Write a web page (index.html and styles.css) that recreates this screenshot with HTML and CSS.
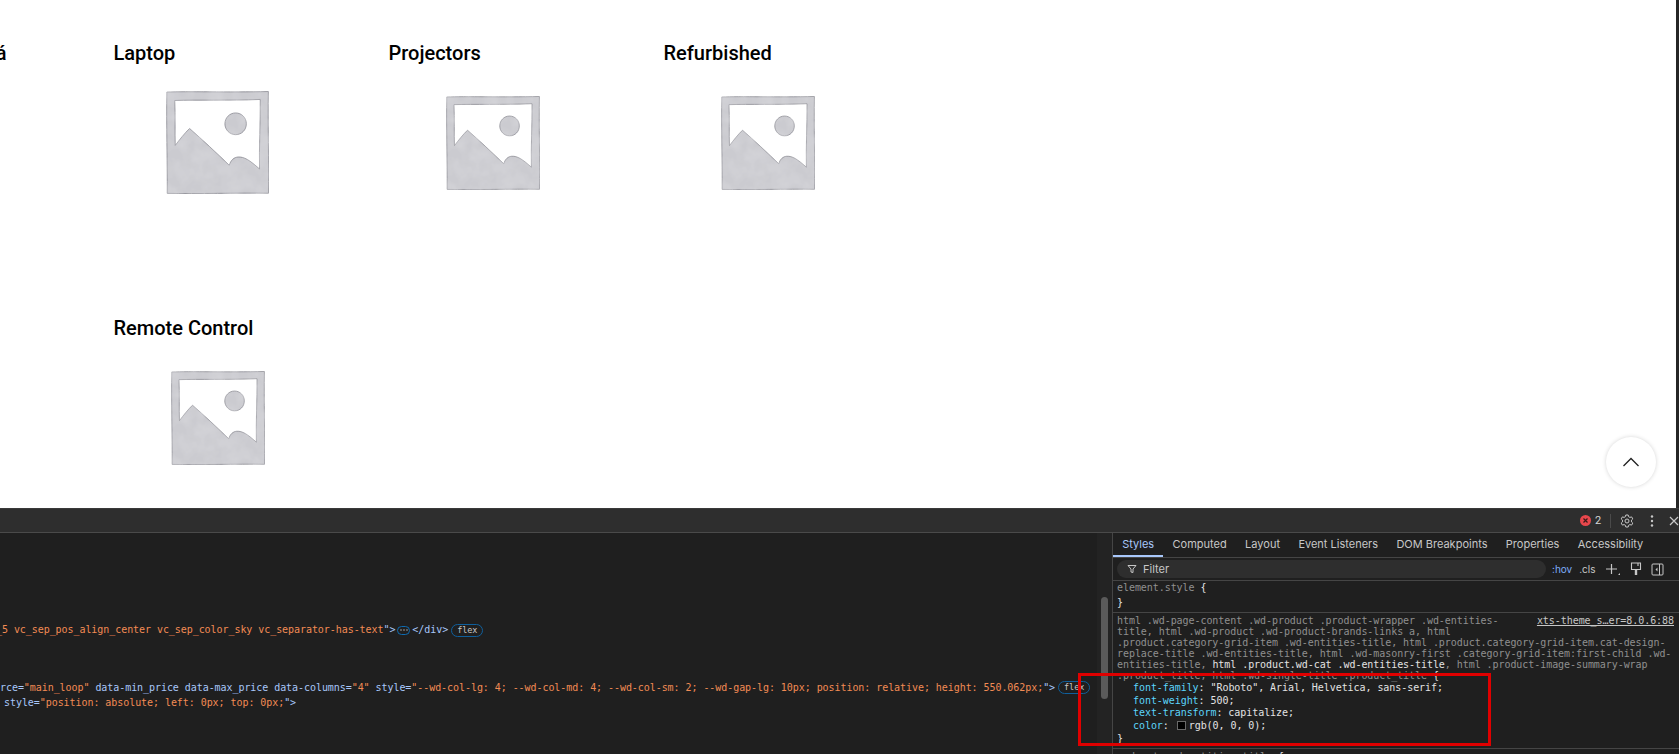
FILE: index.html
```html
<!DOCTYPE html>
<html lang="en">
<head>
<meta charset="utf-8">
<title>Product categories with DevTools</title>
<link rel="stylesheet" href="styles.css">
</head>
<body>
<svg class="defs" aria-hidden="true">
  <defs>
    <filter id="mottle" x="0" y="0" width="100%" height="100%">
      <feTurbulence type="fractalNoise" baseFrequency="0.07" numOctaves="3" seed="4" result="n"/>
      <feColorMatrix in="n" type="matrix" values="0 0 0 0 0.70  0 0 0 0 0.70  0 0 0 0 0.73  0.9 0 0 0 -0.25" result="c"/>
      <feComposite in="c" in2="SourceGraphic" operator="atop"/>
    </filter>
    <symbol id="placeholder" viewBox="0 0 100 100">
      <g filter="url(#mottle)">
        <path class="ph-shape" fill-rule="evenodd" d="M.8 1C20 .2 60 1.400 99.400 .5 98.800 30 100 70 99.500 99.300 70 98.800 30 100 1.200 99.400 1.400 70 .2 30 .8 1ZM8.500 9.200C9.200 25 8.500 40 9 52.800 13 47.500 18 41 22.900 36.400 35 47 50 61 61.400 72.100 63 67 66 64.400 70 64.100 76 63.800 81 67 90.800 75.700 90.300 55 91.700 30 91.500 8.200 60 9.500 30 8.500 8.500 9.200Z"/>
        <path class="ph-shape" d="M67.600 21.300C73.500 21.300 78 26 78 31.800 78 37.800 73.500 42.400 67.600 42.400 61.800 42.400 57.200 37.600 57.200 31.800 57.200 26 61.800 21.300 67.600 21.300Z"/>
      </g>
    </symbol>
  </defs>
</svg>

<main class="page">
  <div class="grid">
    <article class="cell">
      <h3 class="title title-clipped">á</h3>
    </article>
    <article class="cell">
      <h3 class="title">Laptop</h3>
      <div class="thumb"><svg class="ph ph-large"><use href="#placeholder"/></svg></div>
    </article>
    <article class="cell">
      <h3 class="title">Projectors</h3>
      <div class="thumb"><svg class="ph"><use href="#placeholder"/></svg></div>
    </article>
    <article class="cell">
      <h3 class="title">Refurbished</h3>
      <div class="thumb"><svg class="ph"><use href="#placeholder"/></svg></div>
    </article>
    <article class="cell cell-row2">
      <h3 class="title">Remote Control</h3>
      <div class="thumb"><svg class="ph"><use href="#placeholder"/></svg></div>
    </article>
  </div>
  <button class="to-top" aria-label="Scroll to top">
    <svg width="18" height="10" viewBox="0 0 18 10"><path d="M1.500 9 9 1.500 16.500 9" fill="none" stroke="#222" stroke-width="1.300"/></svg>
  </button>
</main>

<section class="devtools">
  <header class="dt-toolbar">
    <span class="err-badge"><svg width="11" height="11" viewBox="0 0 11 11"><circle cx="5.500" cy="5.500" r="5.500" fill="#e8474c"/><path d="M3.500 3.500l4 4M7.500 3.500l-4 4" stroke="#3a1a1a" stroke-width="1.200"/></svg><span>2</span></span>
    <span class="dt-sep"></span>
    <svg class="dt-gear" width="14" height="14" viewBox="0 0 14 14" fill="none" stroke="#c7c7c7" stroke-width="1"><path d="M5.800 1h2.400l.4 1.700 1.300.7 1.700-.5 1.200 2-1.300 1.200v1.800l1.300 1.200-1.200 2-1.700-.5-1.300.7-.4 1.700H5.800l-.4-1.700-1.300-.7-1.700.5-1.200-2 1.300-1.200V6.100L1.200 4.900l1.200-2 1.700.5 1.300-.7z"/><circle cx="7" cy="7" r="2"/></svg>
    <svg class="dt-dots" width="4" height="12" viewBox="0 0 4 12" fill="#c7c7c7"><circle cx="2" cy="1.500" r="1.200"/><circle cx="2" cy="6" r="1.200"/><circle cx="2" cy="10.500" r="1.200"/></svg>
    <svg class="dt-close" width="10" height="10" viewBox="0 0 10 10" stroke="#c7c7c7" stroke-width="1.200"><path d="M1 1l8 8M9 1l-8 8"/></svg>
  </header>
  <div class="dt-body">
    <div class="elements">
      <div class="el-line el-first"><span class="v">_5 vc_sep_pos_align_center vc_sep_color_sky vc_separator-has-text</span><span class="k">"&gt;</span><span class="dots"><svg width="8" height="2" viewBox="0 0 8 2" fill="#c7c7c7"><circle cx="1" cy="1" r=".7"/><circle cx="4" cy="1" r=".7"/><circle cx="7" cy="1" r=".7"/></svg></span><span class="k">&lt;/div&gt;</span><span class="flex-pill">flex</span></div>
      <div class="el-line el-second"><span class="k">rce=</span><span class="v">"main_loop"</span><span class="k"> data-min_price data-max_price data-columns=</span><span class="v">"4"</span><span class="k"> style=</span><span class="v">"--wd-col-lg: 4; --wd-col-md: 4; --wd-col-sm: 2; --wd-gap-lg: 10px; position: relative; height: 550.062px;</span><span class="k">"&gt;</span><span class="flex-pill">flex</span></div>
      <div class="el-line el-third"><span class="k">style=</span><span class="v">"position: absolute; left: 0px; top: 0px;</span><span class="k">"&gt;</span></div>
    </div>
    <div class="scroll-track"><div class="scroll-thumb"></div></div>
    <aside class="sidebar">
      <nav class="tabs">
        <span class="tab tab-active">Styles</span>
        <span class="tab">Computed</span>
        <span class="tab">Layout</span>
        <span class="tab">Event Listeners</span>
        <span class="tab">DOM Breakpoints</span>
        <span class="tab">Properties</span>
        <span class="tab">Accessibility</span>
      </nav>
      <div class="filter-row">
        <div class="filter-pill">
          <svg width="10" height="10" viewBox="0 0 10 10" fill="none" stroke="#c7c7c7" stroke-width="1"><path d="M1 1.500h8L6 5v3.500L4 8V5z"/></svg>
          <span>Filter</span>
        </div>
        <span class="hov">:hov</span>
        <span class="cls">.cls</span>
        <svg class="fi" width="16" height="14" viewBox="0 0 16 14" fill="none" stroke="#c7c7c7" stroke-width="1.200"><path d="M6.500 2v10M1 7h11"/><path d="M15 11v2h-2z" fill="#c7c7c7" stroke="none"/></svg>
        <svg class="fi" width="12" height="14" viewBox="0 0 12 14" fill="none" stroke="#c7c7c7" stroke-width="1.100"><path d="M1.500 1h9v6.500h-9zM8 1v3"/><path d="M4.800 7.500h2.400V13H4.800z" fill="#c7c7c7" stroke="none"/></svg>
        <svg class="fi" width="13" height="13" viewBox="0 0 13 13" fill="none" stroke="#c7c7c7" stroke-width="1"><rect x="1" y="1" width="11" height="11" rx="1"/><path d="M8.500 1v11"/><path d="M6.500 4.500v4l-2-2z" fill="#c7c7c7" stroke="none"/></svg>
      </div>
      <div class="rule rule-element">
        <div class="ln dim">element.style <span class="on">{</span></div>
        <div class="ln on">}</div>
      </div>
      <div class="rule rule-main">
        <div class="sel-first"><span class="dim">html .wd-page-content .wd-product .product-wrapper .wd-entities-</span><a class="src">xts-theme_s…er=8.0.6:88</a></div>
        <div class="sel dim">title, html .wd-product .wd-product-brands-links a, html</div>
        <div class="sel dim">.product.category-grid-item .wd-entities-title, html .product.category-grid-item.cat-design-</div>
        <div class="sel dim">replace-title .wd-entities-title, html .wd-masonry-first .category-grid-item:first-child .wd-</div>
        <div class="sel"><span class="dim">entities-title, </span><span class="on">html .product.wd-cat .wd-entities-title</span><span class="dim">, html .product-image-summary-wrap</span></div>
        <div class="sel dim">.product_title, html .wd-single-title .product_title <span class="on">{</span></div>
        <div class="prop"><span class="pn">font-family</span>: "Roboto", Arial, Helvetica, sans-serif;</div>
        <div class="prop"><span class="pn">font-weight</span>: 500;</div>
        <div class="prop"><span class="pn">text-transform</span>: capitalize;</div>
        <div class="prop"><span class="pn">color</span>: <span class="swatch"></span>rgb(0, 0, 0);</div>
        <div class="ln on">}</div>
      </div>
      <div class="rule rule-next">
        <div class="sel dim">.wd-cat .wd-entities-title <span class="on">{</span></div>
      </div>
    </aside>
  </div>
  <div class="red-box"></div>
</section>
</body>
</html>
```

FILE: styles.css
```css
* { box-sizing: border-box; }
html, body { margin: 0; height: 754px; overflow: hidden; }
body {
  width: 1679px;
  display: flex;
  flex-direction: column;
  background: #fff;
  font-family: "Roboto", "Liberation Sans", sans-serif;
}
.defs { position: absolute; width: 0; height: 0; }

/* page */
.page {
  position: relative;
  height: 508px;
  flex: none;
  overflow: hidden;
  background: #fff;
  border-right: 3px solid #262626;
}
.grid {
  display: grid;
  grid-template-columns: repeat(4, 275px);
  grid-auto-rows: 275px;
  margin-left: -161.500px;
  padding-top: 40.500px;
}
.cell { width: 208px; }
.cell-row2 { grid-column: 2; }
.title {
  margin: 0;
  font-size: 20px;
  line-height: 24px;
  font-weight: 500;
  color: #000;
}
.title-clipped { text-align: right; width: 168px; }
.thumb {
  height: 156px;
  display: flex;
  align-items: center;
  justify-content: center;
}
.ph { width: 94px; height: 96px; display: block; }
.ph-large { width: 103px; height: 105px; }
.ph-shape { fill: #cbcbd0; stroke: #85858d; stroke-width: .8; }
.to-top {
  position: absolute;
  left: 1606px;
  top: 437px;
  width: 50px;
  height: 50px;
  padding: 0;
  border: 0;
  border-radius: 50%;
  background: #fff;
  box-shadow: 0 0 4px rgba(0,0,0,.17);
  display: flex;
  align-items: center;
  justify-content: center;
}

/* devtools */
.devtools {
  position: relative;
  flex: 1;
  min-height: 0;
  overflow: hidden;
  display: flex;
  flex-direction: column;
  background: #1f1f1f;
  color: #e3e3e3;
}
.dt-toolbar {
  height: 25px;
  flex: none;
  display: flex;
  align-items: center;
  padding-left: 1580px;
  background: #2e2e2e;
  border-top: 1px solid #3a3a3a;
  border-bottom: 1px solid #4a4a4a;
}
.err-badge {
  display: flex;
  align-items: center;
  gap: 4px;
  width: 30px;
  font-size: 11px;
  color: #d5d5d5;
}
.dt-sep { width: 1px; height: 14px; background: #4a4a4a; }
.dt-gear { margin-left: 9px; }
.dt-dots { margin-left: 16px; }
.dt-close { margin-left: 15px; flex: none; }
.dt-body { flex: 1; min-height: 0; display: flex; }

.elements {
  width: 1097px;
  flex: none;
  overflow: hidden;
  padding-top: 90px;
  font-family: "DejaVu Sans Mono", monospace;
  font-size: 10px;
  letter-spacing: -.06px;
}
.el-line { height: 14px; line-height: 14px; white-space: pre; display: flex; align-items: center; }
.el-first { margin-left: -4px; }
.el-second { margin-top: 43.500px; }
.el-third { margin-top: 1px; padding-left: 4px; }
.k { color: #a8c7fa; }
.v { color: #f28b54; }
.dots {
  width: 13px;
  height: 9px;
  margin: 0 2px;
  border: 1px solid #0f6bb0;
  border-radius: 5px;
  display: flex;
  align-items: center;
  justify-content: center;
}
.flex-pill {
  height: 13px;
  margin-left: 3px;
  padding: 0 5px;
  border: 1px solid #0f5f9c;
  border-radius: 7px;
  color: #c7c7c7;
  font-size: 8.500px;
  line-height: 11px;
}
.scroll-track { width: 15px; flex: none; padding: 64px 0 0 4px; background: #232323; }
.scroll-thumb { width: 7px; height: 102px; border-radius: 4px; background: #5a5a5a; }

.sidebar {
  flex: 1;
  min-width: 0;
  overflow: hidden;
  border-left: 1px solid #454545;
}
.tabs {
  height: 25px;
  display: flex;
  align-items: center;
  border-bottom: 1px solid #454545;
  font-family: "Inter", "Roboto", sans-serif;
  font-size: 11px;
  color: #c7c7c7;
}
.tab { height: 24px; line-height: 23px; padding: 0 9.200px; white-space: nowrap; }
.tab-active { color: #a8c7fa; border-bottom: 2px solid #a8c7fa; }
.filter-row {
  height: 23px;
  display: flex;
  align-items: center;
  padding-left: 4px;
  border-bottom: 1px solid #454545;
  font-family: "Inter", "Roboto", sans-serif;
  font-size: 11px;
  color: #c7c7c7;
}
.filter-pill {
  width: 429px;
  height: 18px;
  display: flex;
  align-items: center;
  gap: 6px;
  padding-left: 10px;
  border-radius: 9px;
  background: #2e2e2e;
}
.hov { margin-left: 6px; color: #7cacf8; font-size: 10px; }
.cls { margin-left: 7px; font-size: 10px; }
.fi { margin-left: 9px; flex: none; }

.rule {
  font-family: "DejaVu Sans Mono", monospace;
  font-size: 10px;
  letter-spacing: -.06px;
  padding-left: 4px;
  border-bottom: 1px solid #454545;
}
.rule-element { height: 32px; }
.rule-element .ln { line-height: 13px; }
.ln { height: 15px; line-height: 15px; white-space: pre; }
.rule-main { height: 136px; padding-top: 2px; }
.sel-first { display: flex; justify-content: space-between; padding-right: 5px; height: 11px; line-height: 11px; white-space: pre; }
.sel { height: 11px; line-height: 11px; white-space: pre; }
.dim { color: #8f8f8f; }
.on { color: #e3e3e3; }
.src { color: #c7c7c7; text-decoration: underline; }
.prop { height: 12.600px; line-height: 13px; padding-left: 16px; color: #e3e3e3; white-space: pre; }
.pn { color: #5cd5fb; }
.swatch {
  display: inline-block;
  width: 9px;
  height: 9px;
  margin: 0 3px 0 2px;
  vertical-align: -1px;
  background: #000;
  border: 1px solid #6a6a6a;
}
.rule-next { border: 0; padding-top: 2px; }

.red-box {
  position: absolute;
  left: 1078px;
  top: 165px;
  width: 413px;
  height: 73px;
  border: 3px solid #e00000;
  pointer-events: none;
}
```
